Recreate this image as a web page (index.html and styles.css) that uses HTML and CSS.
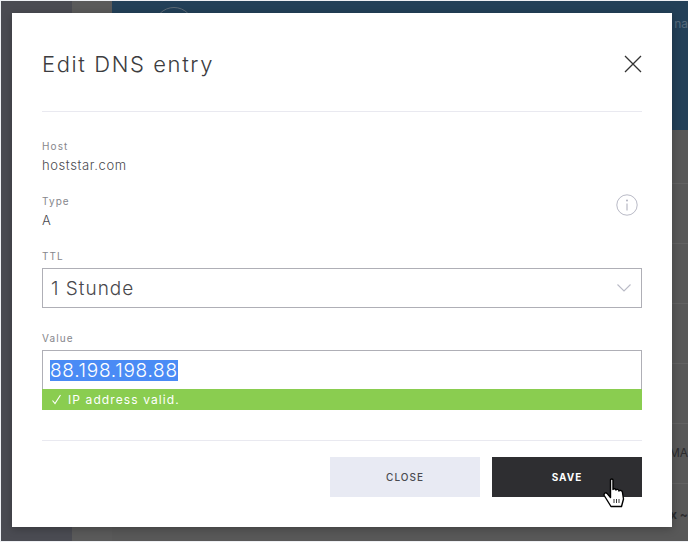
FILE: index.html
```html
<!DOCTYPE html>
<html>
<head>
  <title>Edit DNS entry</title>
  <link rel="stylesheet" href="styles.css">
</head>
<body>
  <div class="page">
    <div class="sidebar"></div>
    <div class="sidebar-tab"></div>
    <div class="main">
      <div class="topbar">
        <div class="avatar"></div>
        <span class="topbar-text">na</span>
      </div>
      <div class="rows">
        <div class="row row-first"></div>
        <div class="row"></div>
        <div class="row"></div>
        <div class="row"></div>
        <div class="row"></div>
        <div class="row row-text">MA</div>
        <div class="row-last">x ~</div>
      </div>
    </div>
  </div>

  <div class="modal">
    <header class="modal-head">
      <h1>Edit DNS entry</h1>
      <svg class="close-icon" width="20" height="20" viewBox="0 0 20 20">
        <path d="M2 2 L18 18 M18 2 L2 18" stroke="#333" stroke-width="1.3" fill="none"/>
      </svg>
    </header>

    <div class="modal-body">
      <div class="field">
        <div class="label">Host</div>
        <div class="value">hoststar.com</div>
      </div>

      <div class="field field-info">
        <div>
          <div class="label">Type</div>
          <div class="value">A</div>
        </div>
        <svg class="info-icon" width="22" height="22" viewBox="0 0 22 22">
          <circle cx="11" cy="11" r="10.2" stroke="#b9bac6" fill="none"/>
          <circle cx="11" cy="6.5" r="0.9" fill="#a9aab8"/>
          <path d="M11 9.5 V16.5" stroke="#a9aab8" fill="none"/>
        </svg>
      </div>

      <div class="field field-ttl">
        <div class="label">TTL</div>
        <div class="select">
          <span>1 Stunde</span>
          <svg width="16" height="10" viewBox="0 0 16 10">
            <path d="M1.5 1.5 L8 8 L14.5 1.5" stroke="#b9bac6" stroke-width="1.1" fill="none"/>
          </svg>
        </div>
      </div>

      <div class="field">
        <div class="label">Value</div>
        <div class="input"><span class="selected">88.198.198.88</span></div>
        <div class="valid">
          <svg width="11" height="11" viewBox="0 0 11 11">
            <path d="M1.5 6.5 L4 9.5 L9.5 1" stroke="#fff" stroke-width="1.1" fill="none"/>
          </svg>
          <span>IP address valid.</span>
        </div>
      </div>
    </div>

    <footer class="modal-foot">
      <button class="btn btn-close">CLOSE</button>
      <button class="btn btn-save">SAVE</button>
    </footer>

    <!-- mouse pointer from the screenshot -->
    <svg class="cursor" width="22" height="30" viewBox="0 0 22 30">
      <path d="M7.5 2 C7.5 0.6 10 0.6 10 2 V11.5 C10.5 10.4 12.6 10.4 13 12 C13.6 11 15.6 11 16 13 C16.6 12 19 12.2 19.4 14 L20.5 21 L18.5 28.5 H8 L1.2 17.5 C0.4 15.6 2.6 14 4 15.4 L7.5 19.5 Z" fill="#fff" stroke="#000" stroke-width="1.4" stroke-linejoin="round"/>
      <path d="M11 21 V25 M13.5 21 V25 M16 21 V25" stroke="#000" stroke-width="0.8" fill="none"/>
    </svg>
  </div>
</body>
</html>
```

FILE: styles.css
```css
* {
  box-sizing: border-box;
}

html, body {
  height: 100%;
}

body {
  font-family: Inter, Arial, sans-serif;
  background-color: #eef0f4;
  margin: 0;
  padding: 1px 0 1px 1px;
  overflow: hidden;
  color: #4a4a50;
}

.page {
  display: flex;
  height: 540px;
}

.sidebar {
  width: 71px;
  background-color: #4a4b52;
}

.sidebar-tab {
  width: 40px;
  background-color: #5a5a5a;
}

.main {
  flex: 1;
  display: flex;
  flex-direction: column;
  background-color: #585858;
}

.topbar {
  height: 129px;
  background-color: #234058;
  display: flex;
  justify-content: space-between;
  padding-left: 42px;
}

.avatar {
  width: 40px;
  height: 40px;
  margin-top: 6px;
  border: 1px solid #5d6a75;
  border-radius: 50%;
}

.topbar-text {
  font-size: 12px;
  color: #55697b;
  margin-top: 15px;
}

.rows {
  flex: 1;
  display: flex;
  flex-direction: column;
}

.row {
  height: 60px;
  border-bottom: 1px solid #626262;
  text-align: right;
}

.row-first {
  height: 54px;
}

.row-text {
  font-size: 12px;
  color: #2c2c2e;
  padding-top: 21px;
}

.row-last {
  font-size: 12px;
  font-weight: bold;
  color: #2c2c2e;
  text-align: right;
  padding-top: 23px;
}

.modal {
  position: absolute;
  left: 12px;
  top: 13px;
  width: 660px;
  height: 514px;
  background-color: #fff;
  padding: 0 30px;
  box-shadow: 0 2px 8px rgba(0, 0, 0, 0.25);
}

.modal-head {
  height: 99px;
  border-bottom: 1px solid #e9e9f0;
  display: flex;
  justify-content: space-between;
  align-items: flex-start;
}

.modal-head h1 {
  margin: 38px 0 0;
  font-size: 22px;
  line-height: 26px;
  font-weight: 300;
  letter-spacing: 1.6px;
  color: #3c3c40;
}

.close-icon {
  margin-top: 41px;
  margin-right: -1px;
}

.modal-body {
  height: 329px;
  border-bottom: 1px solid #e9e9f0;
  padding-top: 28px;
}

.field {
  margin-bottom: 21px;
}

.field-ttl {
  margin-bottom: 24px;
}

.field-info {
  display: flex;
  justify-content: space-between;
  padding-right: 4px;
}

.info-icon {
  margin-top: -1px;
}

.label {
  font-size: 10px;
  line-height: 12px;
  letter-spacing: 1.1px;
  color: #86868c;
  margin-bottom: 5px;
}

.value {
  font-size: 13px;
  line-height: 17px;
  letter-spacing: 0.6px;
  font-weight: 300;
  color: #4a4a50;
}

.select {
  height: 40px;
  margin-top: 6px;
  border: 1px solid #afafb6;
  display: flex;
  justify-content: space-between;
  align-items: center;
  padding: 0 9px 0 8px;
  font-size: 19px;
  font-weight: 300;
  letter-spacing: 1px;
  color: #48484c;
}

.input {
  height: 40px;
  margin-top: 6px;
  border: 1px solid #afafb6;
  border-bottom: none;
  padding: 9px 7px 0;
  font-size: 19px;
  line-height: 21px;
  font-weight: 300;
}

.selected {
  background-color: #4a8bf5;
  color: #fff;
  display: inline-block;
  letter-spacing: 0.7px;
}

.valid {
  height: 21px;
  margin-top: -1px;
  background-color: #8acd50;
  color: #fff;
  font-size: 12px;
  line-height: 21px;
  letter-spacing: 1.1px;
  padding-left: 9px;
  display: flex;
  align-items: center;
  gap: 6px;
}

.modal-foot {
  display: flex;
  justify-content: flex-end;
  gap: 12px;
  padding-top: 16px;
}

.btn {
  width: 150px;
  height: 40px;
  border: none;
  font-family: Inter, Arial, sans-serif;
  font-size: 10px;
  letter-spacing: 1px;
  cursor: pointer;
}

.btn-close {
  background-color: #e8eaf3;
  color: #4a4a50;
  font-weight: 500;
}

.btn-save {
  background-color: #2e2e31;
  color: #fff;
  font-weight: 700;
}

.cursor {
  position: absolute;
  left: 591px;
  top: 465px;
}
```
